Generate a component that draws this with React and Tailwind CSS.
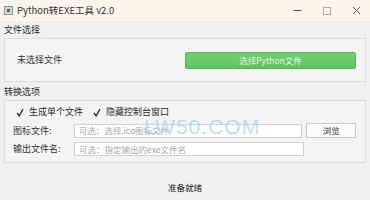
import React from 'react';

const font = { fontFamily: '"Noto Sans CJK SC", "Liberation Sans", sans-serif' };

const Check = ({ label }) => (
  <label className="flex items-center gap-[4px]">
    <span className="flex h-[10px] w-[10px] items-center justify-center">
      <svg width="8" height="9" viewBox="0 0 8 9">
        <path d="M1 5 L3.2 7.8 L7 1" fill="none" stroke="#222" strokeWidth="1.3" />
      </svg>
    </span>
    <span>{label}</span>
  </label>
);

const App = () => {
  return (
    <div className="relative flex h-[200px] w-[370px] flex-col overflow-hidden bg-[#f0f0f0] text-[9px] text-[#2a2a2a]" style={font}>
      {/* Title bar */}
      <div className="flex h-[21px] items-center bg-[#fbf4ec]">
        <div className="ml-[4px] flex h-[9px] w-[9px] items-center justify-center border border-[#8a9a95] bg-[#cfd8d5]">
          <div className="h-[3px] w-[3px] bg-[#4c6a60]" />
        </div>
        <span className="ml-[4px] text-[9.5px] text-[#333]">Python转EXE工具 v2.0</span>
        <div className="ml-auto flex items-center text-[#444]">
          <span className="flex w-[30px] justify-center">
            <svg width="9" height="9" viewBox="0 0 9 9"><path d="M0.5 4.5 H8.5" stroke="#555" strokeWidth="1" /></svg>
          </span>
          <span className="flex w-[30px] justify-center">
            <svg width="8" height="8" viewBox="0 0 8 8"><rect x="0.5" y="0.5" width="7" height="7" fill="none" stroke="#aaa" strokeWidth="1" /></svg>
          </span>
          <span className="flex w-[28px] justify-center">
            <svg width="9" height="9" viewBox="0 0 9 9"><path d="M1 1 L8 8 M8 1 L1 8" stroke="#555" strokeWidth="1" /></svg>
          </span>
        </div>
      </div>

      {/* File group */}
      <div className="mt-[3px] pl-[4px] leading-[12px]">文件选择</div>
      <div className="mx-[4px] mt-[2px] flex h-[44px] items-center border border-[#dcdcdc] bg-[#f3f3f3] pl-[12px] pr-[9px]">
        <span className="text-[#333]">未选择文件</span>
        <button className="ml-auto h-[17px] w-[171px] rounded-[2px] border border-[#58b158] bg-gradient-to-b from-[#72d072] to-[#5fc25f] text-[8.5px] text-[#e6f6e6]">
          选择Python文件
        </button>
      </div>

      {/* Options group */}
      <div className="mt-[4px] pl-[4px] leading-[12px]">转换选项</div>
      <div className="mx-[4px] mt-[2px] flex h-[63px] flex-col border border-[#dcdcdc] bg-[#f3f3f3] pl-[8px] pr-[9px] pt-[4px]">
        <div className="flex h-[14px] items-center gap-[9px] pl-[2px]">
          <Check label="生成单个文件" />
          <Check label="隐藏控制台窗口" />
        </div>
        <div className="mt-[4px] flex h-[15px] items-center">
          <span className="w-[61px] text-[#333]">图标文件:</span>
          <div className="flex h-[14px] w-[230px] items-center border border-[#d0d0d0] bg-white pl-[4px] text-[8.5px] text-[#a8a8a8]">
            可选：选择.ico图标文件
          </div>
          <button className="ml-[4px] h-[15px] w-[50px] border border-[#c9c9c9] bg-[#fafafa] text-[8.5px] text-[#333]">浏览</button>
        </div>
        <div className="mt-[4px] flex h-[14px] items-center">
          <span className="w-[61px] text-[#333]">输出文件名:</span>
          <div className="flex h-[14px] w-[230px] items-center border border-[#d0d0d0] bg-white pl-[4px] text-[8.5px] text-[#a8a8a8]">
            可选：指定输出的exe文件名
          </div>
        </div>
      </div>

      {/* Status */}
      <div className="mt-auto mb-[6px] text-center text-[8.5px] text-[#222]">准备就绪</div>

      {/* Watermark */}
      <div
        className="pointer-events-none absolute left-[144px] top-[111px] text-[21px] tracking-[1px] text-[#9fd3ee] opacity-70"
        style={{ fontFamily: '"Liberation Sans", sans-serif' }}
      >
        LW50.COM
      </div>
    </div>
  );
};

export default App;
